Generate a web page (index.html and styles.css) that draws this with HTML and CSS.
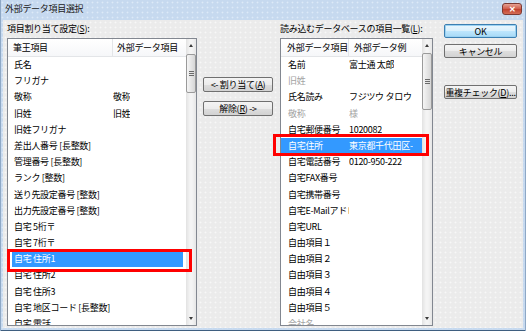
FILE: index.html
```html
<!DOCTYPE html>
<html lang="ja">

<head>
    <meta charset="UTF-8">
    <title>外部データ項目選択</title>
    <link rel="stylesheet" href="styles.css">
</head>

<body>
    <div class="window">
        <div class="titlebar">
            <span class="title">外部データ項目選択</span>
            <span class="close">&#x2715;</span>
        </div>

        <div class="main">
            <!-- 左: 筆王項目 -->
            <div class="panel panel-left">
                <div class="label">項目割り当て設定(<u>S</u>):</div>
                <div class="listview">
                    <div class="lv-body">
                        <div class="lv-head">
                            <span class="c1">筆王項目</span>
                            <span class="c2">外部データ項目</span>
                        </div>
                        <div class="lv-rows">
                            <div class="row"><span class="c1">氏名</span><span class="c2"></span></div>
                            <div class="row"><span class="c1">フリガナ</span><span class="c2"></span></div>
                            <div class="row"><span class="c1">敬称</span><span class="c2">敬称</span></div>
                            <div class="row"><span class="c1">旧姓</span><span class="c2">旧姓</span></div>
                            <div class="row"><span class="c1">旧姓フリガナ</span><span class="c2"></span></div>
                            <div class="row"><span class="c1">差出人番号 [長整数]</span><span class="c2"></span></div>
                            <div class="row"><span class="c1">管理番号 [長整数]</span><span class="c2"></span></div>
                            <div class="row"><span class="c1">ランク [整数]</span><span class="c2"></span></div>
                            <div class="row"><span class="c1">送り先設定番号 [整数]</span><span class="c2"></span></div>
                            <div class="row"><span class="c1">出力先設定番号 [整数]</span><span class="c2"></span></div>
                            <div class="row"><span class="c1">自宅 5桁〒</span><span class="c2"></span></div>
                            <div class="row"><span class="c1">自宅 7桁〒</span><span class="c2"></span></div>
                            <div class="row selected"><span class="c1">自宅 住所1</span><span class="c2"></span></div>
                            <div class="row"><span class="c1">自宅 住所2</span><span class="c2"></span></div>
                            <div class="row"><span class="c1">自宅 住所3</span><span class="c2"></span></div>
                            <div class="row"><span class="c1">自宅 地区コード [長整数]</span><span class="c2"></span></div>
                            <div class="row"><span class="c1">自宅 電話</span><span class="c2"></span></div>
                        </div>
                    </div>
                    <div class="scrollbar">
                        <div class="sb-btn up"></div>
                        <div class="sb-track">
                            <div class="sb-thumb thumb-left"><span class="grip"></span></div>
                        </div>
                        <div class="sb-btn down"></div>
                    </div>
                </div>
            </div>

            <!-- 中央ボタン -->
            <div class="mid">
                <div class="btn">&lt;- 割り当て(<u>A</u>)</div>
                <div class="btn">解除(<u>R</u>) -&gt;</div>
            </div>

            <!-- 右: 読み込むデータベース -->
            <div class="panel panel-right">
                <div class="label">読み込むデータベースの項目一覧(<u>L</u>):</div>
                <div class="listview">
                    <div class="lv-body">
                        <div class="lv-head">
                            <span class="c1">外部データ項目</span>
                            <span class="c2">外部データ例</span>
                        </div>
                        <div class="lv-rows">
                            <div class="row"><span class="c1">名前</span><span class="c2">富士通 太郎</span></div>
                            <div class="row dim"><span class="c1">旧姓</span><span class="c2"></span></div>
                            <div class="row"><span class="c1">氏名読み</span><span class="c2">フジツウ タロウ</span></div>
                            <div class="row dim"><span class="c1">敬称</span><span class="c2">様</span></div>
                            <div class="row"><span class="c1">自宅郵便番号</span><span class="c2">1020082</span></div>
                            <div class="row selected"><span class="c1">自宅住所</span><span class="c2">東京都千代田区-</span></div>
                            <div class="row"><span class="c1">自宅電話番号</span><span class="c2">0120-950-222</span></div>
                            <div class="row"><span class="c1">自宅FAX番号</span><span class="c2"></span></div>
                            <div class="row"><span class="c1">自宅携帯番号</span><span class="c2"></span></div>
                            <div class="row"><span class="c1">自宅E-Mailアドレ</span><span class="c2"></span></div>
                            <div class="row"><span class="c1">自宅URL</span><span class="c2"></span></div>
                            <div class="row"><span class="c1">自由項目１</span><span class="c2"></span></div>
                            <div class="row"><span class="c1">自由項目２</span><span class="c2"></span></div>
                            <div class="row"><span class="c1">自由項目３</span><span class="c2"></span></div>
                            <div class="row"><span class="c1">自由項目４</span><span class="c2"></span></div>
                            <div class="row"><span class="c1">自由項目５</span><span class="c2"></span></div>
                            <div class="row dim"><span class="c1">会社名</span><span class="c2"></span></div>
                        </div>
                    </div>
                    <div class="scrollbar">
                        <div class="sb-btn up"></div>
                        <div class="sb-track">
                            <div class="sb-thumb thumb-right"><span class="grip"></span></div>
                        </div>
                        <div class="sb-btn down"></div>
                    </div>
                </div>
            </div>

            <!-- 右側ボタン -->
            <div class="side">
                <div class="btn btn-default">OK</div>
                <div class="btn">キャンセル</div>
                <div class="btn btn-check">重複チェック(<u>D</u>)...</div>
            </div>
        </div>

        <!-- 赤枠 -->
        <div class="mark mark-left"></div>
        <div class="mark mark-right"></div>
    </div>
</body>

</html>
```

FILE: styles.css
```css
* {
    margin: 0;
    padding: 0;
    box-sizing: border-box;
}

body {
    width: 526px;
    height: 331px;
    overflow: hidden;
    font-family: "Noto Sans CJK JP", "Noto Sans", sans-serif;
    font-size: 9px;
    letter-spacing: -0.3px;
    color: #000;
}

u {
    text-decoration: underline;
}

.window {
    position: relative;
    width: 526px;
    height: 331px;
    display: flex;
    flex-direction: column;
    padding: 0 3px 3px;
    background-color: #c6d9ef;
    background-image: radial-gradient(circle, #dde9f7 0.8px, transparent 1.1px);
    background-size: 5px 5px;
    box-shadow: inset 1px 0 0 #8ea8c6, inset -1px 0 0 #8ea8c6, inset 0 -1px 0 #3f5f80;
}

/* タイトルバー */
.titlebar {
    flex-shrink: 0;
    height: 20px;
    display: flex;
    justify-content: space-between;
    align-items: flex-start;
    padding: 3px 1px 0 2px;
}

.title {
    line-height: 12px;
    color: #1a1a1a;
}

.close {
    width: 20px;
    height: 12px;
    border: 1px solid #7d3a33;
    border-radius: 3px;
    background: linear-gradient(#e6a294, #cf5a48 50%, #c0402e 51%, #d46e58);
    color: #fff;
    font-size: 8px;
    font-weight: bold;
    line-height: 10px;
    text-align: center;
}

/* 本体 */
.main {
    flex: 1;
    min-height: 0;
    display: flex;
    padding: 2px 6px 2px 4px;
    background-color: #ebebeb;
    background-image: radial-gradient(circle, #f7f7f7 0.8px, transparent 1.1px);
    background-size: 5px 5px;
}

.panel {
    min-height: 0;
    display: flex;
    flex-direction: column;
}

.panel-left {
    width: 190px;
}

.panel-right {
    width: 153px;
    margin-left: 7px;
}

.label {
    flex-shrink: 0;
    height: 14px;
    line-height: 14px;
    margin-bottom: 2px;
    white-space: nowrap;
}

/* リストビュー */
.listview {
    flex: 1;
    min-height: 0;
    display: flex;
    border: 1px solid #828790;
    background: #fff;
    overflow: hidden;
}

.lv-body {
    flex: 1;
    min-width: 0;
    min-height: 0;
    display: flex;
    flex-direction: column;
}

.lv-head {
    flex-shrink: 0;
    height: 18px;
    display: flex;
    border-bottom: 1px solid #e3e5e8;
    background: linear-gradient(#fff, #f6f7f9);
}

.lv-head span {
    line-height: 17px;
    white-space: nowrap;
}

.lv-rows {
    flex: 1;
    min-height: 0;
    overflow: hidden;
}

.row {
    height: 16.2px;
    display: flex;
    line-height: 16.2px;
    white-space: nowrap;
}

.row span {
    overflow: hidden;
}

.row.selected {
    background: #3399ff;
    color: #fff;
}

.row.dim {
    color: #a3a3a3;
}

/* 左リストの列 */
.panel-left .lv-head .c1 {
    width: 105px;
    padding-left: 5px;
    border-right: 1px solid #e3e5e8;
}

.panel-left .lv-head .c2 {
    padding-left: 4px;
}

.panel-left .row .c1 {
    width: 105px;
    padding-left: 6px;
}

.panel-left .row.selected {
    margin: 0 3px 0 4px;
}

.panel-left .row.selected .c1 {
    padding-left: 2px;
    width: 101px;
}

/* 右リストの列 */
.panel-right .lv-head .c1 {
    width: 68px;
    padding-left: 6px;
    border-right: 1px solid #e3e5e8;
}

.panel-right .lv-head .c2 {
    padding-left: 5px;
}

.panel-right .row .c1 {
    width: 68px;
    padding-left: 7px;
}

/* スクロールバー */
.scrollbar {
    flex-shrink: 0;
    width: 10px;
    display: flex;
    flex-direction: column;
    background: linear-gradient(90deg, #e2e2e2, #f4f4f4 40%, #f4f4f4 60%, #e6e6e6);
}

.sb-btn {
    height: 13px;
    display: flex;
    align-items: center;
    justify-content: center;
}

.sb-btn::before {
    content: "";
    border-left: 2.5px solid transparent;
    border-right: 2.5px solid transparent;
}

.sb-btn.up::before {
    border-bottom: 3px solid #3a3a3a;
}

.sb-btn.down::before {
    border-top: 3px solid #3a3a3a;
}

.sb-track {
    flex: 1;
}

.sb-thumb {
    display: flex;
    align-items: center;
    justify-content: center;
    border: 1px solid #9a9a9a;
    border-radius: 2px;
    background: linear-gradient(90deg, #f5f5f5, #e6e6e6 50%, #d6d6d6);
}

.thumb-left {
    height: 39px;
    margin-top: 2px;
}

.thumb-right {
    height: 57px;
    margin-top: 1px;
}

.grip {
    width: 5px;
    height: 5px;
    background: repeating-linear-gradient(#6a6a6a 0, #6a6a6a 1px, transparent 1px, transparent 2px);
}

/* ボタン */
.mid {
    flex-shrink: 0;
    width: 70px;
    margin-left: 6px;
    display: flex;
    flex-direction: column;
    gap: 9px;
    padding-top: 55px;
}

.mid .btn {
    height: 15px;
}

.side {
    flex-shrink: 0;
    width: 73px;
    margin-left: 11px;
    display: flex;
    flex-direction: column;
    gap: 6px;
    padding-top: 2px;
}

.btn {
    height: 14px;
    display: flex;
    align-items: center;
    justify-content: center;
    border: 1px solid #707070;
    border-radius: 2px;
    background: linear-gradient(#f4f4f4, #ececec 50%, #dedede 51%, #d2d2d2);
    white-space: nowrap;
}

.btn-default {
    border-color: #3c7fb1;
    background: linear-gradient(#eaf6fd, #d9f0fc 50%, #bee6fd 51%, #a7d9f5);
    box-shadow: inset 0 0 0 1px #9bd2f2;
}

.btn-check {
    margin-top: 21px;
}

/* 赤枠 */
.mark {
    position: absolute;
    border: 3px solid #ff0000;
}

.mark-left {
    left: 7px;
    top: 249px;
    width: 185px;
    height: 23px;
}

.mark-right {
    left: 273px;
    top: 134px;
    width: 156px;
    height: 22px;
}
```
